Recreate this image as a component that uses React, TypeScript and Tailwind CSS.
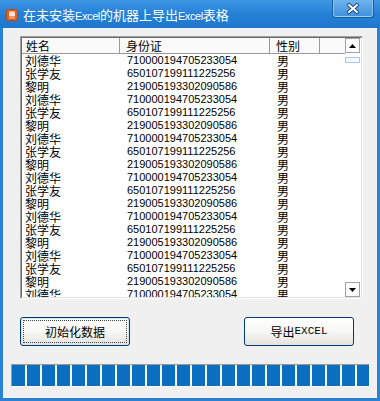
import React from 'react'

const people = [
  { name: '刘德华', id: '710000194705233054', sex: '男' },
  { name: '张学友', id: '650107199111225256', sex: '男' },
  { name: '黎明', id: '219005193302090586', sex: '男' },
]

const rows = Array.from({ length: 19 }, (_, i) => people[i % 3])

const cjk = "font-['Noto_Sans_CJK_SC',sans-serif]"

function TitleIcon() {
  return (
    <svg width="12" height="12" viewBox="0 0 12 12">
      <rect x="0.5" y="0.5" width="11" height="11" rx="2" fill="#e6621f" stroke="#b8460f" />
      <rect x="3" y="2.5" width="6" height="5" rx="1" fill="#fbe6d8" />
      <rect x="3" y="8.5" width="6" height="1" fill="#f7c8a8" />
    </svg>
  )
}

function CloseGlyph() {
  return (
    <svg width="14" height="11" viewBox="0 0 14 11">
      <path d="M3 2 L11 9 M11 2 L3 9" stroke="#1d4e85" strokeWidth="4" strokeLinecap="round" />
      <path d="M3 2 L11 9 M11 2 L3 9" stroke="#ffffff" strokeWidth="2" strokeLinecap="round" />
    </svg>
  )
}

function Arrow({ down }: { down?: boolean }) {
  return (
    <svg width="7" height="4" viewBox="0 0 7 4">
      <path d={down ? 'M0 0 H7 L3.5 4 Z' : 'M0 4 H7 L3.5 0 Z'} fill="#000" />
    </svg>
  )
}

export default function App() {
  return (
    <div className="w-[380px] h-[401px] flex flex-col overflow-hidden bg-[#2a82d6] font-['Liberation_Sans','Noto_Sans_CJK_SC',sans-serif]">
      {/* Title bar */}
      <div className="relative h-[28px] shrink-0 flex items-center pl-[6px] pt-[2px] bg-gradient-to-b from-[#3f98e4] via-[#2580d6] to-[#1f78cf]">
        <TitleIcon />
        <span className={`ml-[5px] text-white text-[13px] leading-[16px] whitespace-nowrap ${cjk}`}>
          在未安装<span className="font-['Liberation_Sans',sans-serif] text-[11px] tracking-[-0.4px]">Excel</span>的机器上导出<span className="font-['Liberation_Sans',sans-serif] text-[11px] tracking-[-0.4px]">Excel</span>表格
        </span>
        <div className="absolute right-[6px] top-0 w-[42px] h-[18px] flex items-center justify-center rounded-b-[4px] border border-t-0 border-[#1b5d9f] bg-gradient-to-b from-[#6db4ee] to-[#3f8fdc] shadow-[inset_0_-1px_0_#9fd0f6,inset_1px_0_0_#8cc4f2,inset_-1px_0_0_#8cc4f2]">
          <CloseGlyph />
        </div>
      </div>

      {/* Client area */}
      <div className="flex-1 mx-[3px] mb-[3px] bg-[#f0f0f0] flex flex-col">
        {/* List view */}
        <div className="ml-[17px] mt-[8px] w-[343px] h-[263px] border border-t-[#a0a0a0] border-l-[#a0a0a0] border-b-white border-r-white">
          <div className="w-full h-full flex bg-white border border-t-[#6a6a6a] border-l-[#6a6a6a] border-b-[#e3e3e3] border-r-[#e3e3e3]">
            <div className="flex-1 flex flex-col overflow-hidden">
              {/* Header */}
              <div className={`flex h-[16px] shrink-0 text-[12px] leading-[15px] text-black ${cjk}`}>
                <div className="w-[98px] pl-[4px] bg-[#fafafa] border-r border-b border-[#9a9a9a]">姓名</div>
                <div className="w-[150px] pl-[6px] bg-[#fafafa] border-r border-b border-[#9a9a9a]">身份证</div>
                <div className="w-[50px] pl-[6px] bg-[#fafafa] border-r border-b border-[#9a9a9a]">性别</div>
                <div className="flex-1 bg-[#fafafa] border-b border-[#9a9a9a]" />
              </div>
              {/* Rows */}
              {rows.map((p, i) => (
                <div key={i} className="flex h-[13px] shrink-0 items-center text-black whitespace-nowrap">
                  <div className={`w-[98px] pl-[3px] text-[12px] leading-[13px] ${cjk}`}>{p.name}</div>
                  <div className="w-[150px] pl-[7px] text-[11px] leading-[13px] font-['Liberation_Sans',sans-serif]">{p.id}</div>
                  <div className={`w-[50px] pl-[7px] text-[12px] leading-[13px] ${cjk}`}>{p.sex}</div>
                </div>
              ))}
            </div>
            {/* Scrollbar */}
            <div className="w-[16px] h-full flex flex-col bg-white">
              <div className="w-[15px] h-[15px] flex items-center justify-center border border-[#a0a0a0] bg-white">
                <Arrow />
              </div>
              <div className="mt-[4px] w-[15px] h-[6px] border border-[#a9c9e8] bg-[#f2f8fd]" />
              <div className="flex-1" />
              <div className="w-[15px] h-[15px] flex items-center justify-center border border-[#a0a0a0] bg-white">
                <Arrow down />
              </div>
            </div>
          </div>
        </div>

        {/* Buttons */}
        <div className="flex mt-[18px]">
          <button className="relative ml-[17px] w-[110px] h-[29px] flex items-center justify-center rounded-[3px] border border-[#003c74] bg-gradient-to-b from-white via-[#f7f7f4] to-[#e4e3dd] shadow-[inset_0_0_0_1px_#d6e6f8]">
            <span className="absolute inset-[2px] border border-dotted border-[#444]" />
            <span className={`text-[12px] text-black ${cjk}`}>初始化数据</span>
          </button>
          <button className="ml-[114px] w-[110px] h-[29px] flex items-center justify-center rounded-[3px] border border-[#003c74] bg-gradient-to-b from-white via-[#f7f7f4] to-[#e4e3dd]">
            <span className={`text-[12px] text-black ${cjk}`}>导出</span>
            <span className="text-[11px] text-black font-['Liberation_Mono',monospace]">EXCEL</span>
          </button>
        </div>

        {/* Progress bar */}
        <div className="mt-[18px] ml-[8px] w-[359px] h-[23px] border border-t-[#9a9a9a] border-l-[#9a9a9a] border-b-white border-r-white bg-[#f6f6f6] flex gap-[2px] overflow-hidden">
          {Array.from({ length: 24 }).map((_, i) => (
            <div key={i} className="w-[13px] h-full shrink-0 bg-[#0a6ec1]" />
          ))}
        </div>
      </div>
    </div>
  )
}
